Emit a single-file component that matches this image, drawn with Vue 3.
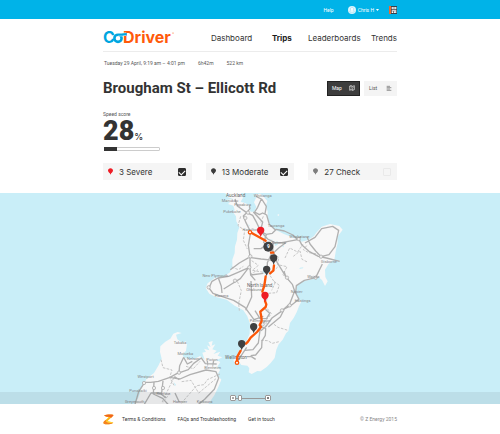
<script setup>
import { ref } from 'vue'

const score = ref(28)
const zoomLevel = ref(10)
const view = ref('map')

const navItems = [
  { label: 'Dashboard', active: false },
  { label: 'Trips', active: true },
  { label: 'Leaderboards', active: false },
  { label: 'Trends', active: false },
]

const filters = ref([
  { id: 'severe', label: '3 Severe', color: '#ee1c25', checked: true },
  { id: 'moderate', label: '13 Moderate', color: '#3a3a3a', checked: true },
  { id: 'check', label: '27 Check', color: '#7d7d7d', checked: false },
])

const pins = [
  { x: 782, y: 172, color: '#ee1c25' },
  { x: 821, y: 255, color: '#3f4041' },
  { x: 800, y: 289, color: '#3f4041' },
  { x: 795, y: 367, color: '#ee1c25' },
  { x: 761, y: 461, color: '#3f4041' },
  { x: 725, y: 512, color: '#3f4041' },
]

const places = [
  { x: 707, y: 53, name: 'Auckland', major: true },
  { x: 690, y: 66, name: 'Manukau' },
  { x: 728, y: 78, name: 'Papakura' },
  { x: 788, y: 53, name: 'Whitianga' },
  { x: 696, y: 101, name: 'Pukekohe' },
  { x: 828, y: 143, name: 'Tauranga' },
  { x: 752, y: 154, name: 'Hamilton' },
  { x: 898, y: 174, name: 'Whakatane' },
  { x: 836, y: 192, name: 'Rotorua' },
  { x: 987, y: 250, name: 'Gisborne' },
  { x: 646, y: 293, name: 'New Plymouth' },
  { x: 940, y: 296, name: 'Wairoa' },
  { x: 779, y: 321, name: 'North Island', major: true },
  { x: 762, y: 334, name: 'Ohakune' },
  { x: 890, y: 341, name: 'Napier' },
  { x: 665, y: 353, name: 'Hawera' },
  { x: 908, y: 366, name: 'Hastings' },
  { x: 780, y: 426, name: 'Palmerston' },
  { x: 708, y: 539, name: 'Wellington', major: true },
  { x: 540, y: 494, name: 'Takaka' },
  { x: 556, y: 525, name: 'Motueka' },
  { x: 580, y: 540, name: 'Nelson' },
  { x: 636, y: 545, name: 'Picton' },
  { x: 638, y: 569, name: 'Blenheim' },
  { x: 437, y: 596, name: 'Westport' },
  { x: 414, y: 637, name: 'Punakaiki' },
  { x: 490, y: 645, name: 'Reefton' },
  { x: 614, y: 669, name: 'Kaikoura' },
  { x: 404, y: 669, name: 'Greymouth' },
  { x: 540, y: 669, name: 'Hanmer' },
]

const junctions = [
  [736, 115], [751, 230], [748, 263], [705, 303], [626, 323], [861, 294], [963, 231],
  [947, 294], [846, 392], [869, 377], [788, 434], [896, 178], [462, 625], [489, 625],
  [537, 579], [432, 610], [744, 99],
]
</script>

<template>
  <div class="page">
    <div class="topbar">
      <div class="wrap topbar-row">
        <a href="#" class="top-link">Help</a>
        <button type="button" class="user">
          <svg viewBox="0 0 16 16" class="avatar" aria-hidden="true">
            <circle cx="8" cy="8" r="8" fill="#d9f3fc" />
            <path d="M8 3c-2 0-3 1.300-2.800 3.200.1 1.200.6 2 1.200 2.500-.2.900-3 1.100-3.200 3.300h9.600c-.2-2.200-3-2.400-3.200-3.300.6-.5 1.100-1.300 1.200-2.500C11 4.300 10 3 8 3z" fill="#fff" stroke="#6dcdec" stroke-width=".8" />
          </svg>
          <span>Chris H</span>
          <svg viewBox="0 0 8 5" class="caret" aria-hidden="true"><path d="M0 0h8L4 5z" fill="#fff" /></svg>
        </button>
        <svg viewBox="0 0 24 24" class="org" aria-hidden="true">
          <rect width="24" height="24" fill="#39414a" />
          <rect width="6" height="24" fill="#ed6a2c" />
          <path d="M8 3h6v6H8zM16 3h6v6h-6zM8 11h14v3H8zM8 16h5v5H8zM15 16h7v5h-7z" fill="#fff" />
          <path d="M10 5h2v2h-2zM18 5h2v2h-2zM17 18h3v1h-3z" fill="#39414a" />
        </svg>
      </div>
    </div>

    <div class="wrap">
      <header class="header">
        <a href="#" class="logo" aria-label="CoDriver">
          <svg viewBox="0 0 72 24" class="logo-art">
            <text x="0" y="17" class="logo-blue">C</text>
            <text x="20" y="17" class="logo-orange">Driver</text>
            <circle cx="15" cy="12.300" r="3.600" fill="none" stroke="#00a5e0" stroke-width="2.600" />
            <path d="M15 8.600h3.600c2 0 2.200-.4 4.600-.4" fill="none" stroke="#fff" stroke-width="3.400" />
            <path d="M15 8.600h3.600c2 0 2.200-.4 5.200-.4" fill="none" stroke="#00a5e0" stroke-width="2.400" />
            <circle cx="70" cy="7" r=".6" fill="#ff5a0a" />
          </svg>
        </a>
        <nav class="nav">
          <a v-for="item in navItems" :key="item.label" href="#" :class="{ active: item.active }">{{ item.label }}</a>
        </nav>
      </header>

      <div class="meta">
        <span>Tuesday 29 April, 9:19 am – 4:01 pm</span>
        <span>6h42m</span>
        <span>522 km</span>
      </div>

      <div class="title-row">
        <h1>Brougham St – Ellicott Rd</h1>
        <div class="views">
          <button type="button" :class="{ on: view === 'map' }" @click="view = 'map'">
            <span>Map</span>
            <svg viewBox="0 0 18 18" aria-hidden="true">
              <path d="M2 3l4-1 5 2 5-2v12l-5 2-5-2-4 2zM6 2v5M6 11v3M11 4v3M11 11v5M7 8l3 2M13 7l-2 3" fill="none" stroke="currentColor" stroke-width="1.800" />
            </svg>
          </button>
          <button type="button" :class="{ on: view === 'list' }" @click="view = 'list'">
            <span>List</span>
            <svg viewBox="0 0 18 18" aria-hidden="true">
              <path d="M2 4h10M2 8h14M2 12h10M2 16h14" fill="none" stroke="currentColor" stroke-width="1.800" />
            </svg>
          </button>
        </div>
      </div>

      <section class="score">
        <div class="score-label">Speed score</div>
        <div class="score-value"><span>{{ score }}</span><small>%</small></div>
        <div class="bar" role="progressbar" :aria-valuenow="score" aria-label="Speed score">
          <div class="bar-fill" :style="{ width: score - 4 + '%' }"></div>
        </div>
      </section>

      <div class="filters">
        <label v-for="f in filters" :key="f.id" class="filter" :for="f.id">
          <svg viewBox="0 0 15 20" class="filter-pin" aria-hidden="true">
            <path d="M7.500 0C3 0 0 3.200 0 7c0 3.500 3 6 5.500 8L7.500 20l2-5C12 13 15 10.500 15 7c0-3.800-3-7-7.500-7z" :fill="f.color" />
          </svg>
          <span>{{ f.label }}</span>
          <input :id="f.id" v-model="f.checked" type="checkbox" />
        </label>
      </div>
    </div>

    <section class="map" aria-label="Trip map">
      <svg class="map-art" viewBox="0 40 1500 633">
        <g fill="#f8f8f8">
          <path d="M672 40L690 46 682 52 700 58 676 61 690 68 684 73 700 78 704 92 698 96 708 110 709 125 718 143 712 160 711 180 705 200 704 220 697 240 697 262 690 278 670 291 645 294 623 311 617 325 628 342 648 352 680 360 704 378 730 392 742 410 750 432 749 462 738 488 722 505 710 530 700 541 706 553 718 548 724 556 742 558 748 566 746 578 755 583 772 574 782 575 800 562 812 550 824 535 829 510 836 494 848 480 858 461 865 454 870 430 881 415 890 398 897 380 905 364 893 355 888 335 891 318 906 305 930 300 955 292 966 301 975 319 983 305 976 292 975 270 986 252 1003 240 1008 210 1013 190 1012 172 1028 150 1018 139 990 133 965 141 950 158 942 169 925 181 905 186 880 174 850 162 828 151 812 139 803 118 803 95 797 80 802 64 790 50 782 42 766 44 768 55 762 68 769 82 763 96 752 96 745 84 752 78 735 70 722 66 729 54 722 40z" />
          <path d="M545 460L528 465 532 479 546 489 558 485 561 493 558 513 548 526 551 533 565 538 583 538 600 529 614 540 607 519 618 516 612 507 628 512 621 497 632 502 625 488 638 484 635 498 646 494 637 509 650 513 640 523 661 516 653 528 667 533 650 542 661 547 653 560 660 571 652 586 664 600 655 622 643 647 625 673 382 673 405 672 415 654 425 625 440 597 462 580 475 558 485 537 480 517 481 500 496 486 511 477 520 462 533 457z" />
          <path d="M834 103l4 2-2 4-4-2z" />
        </g>
        <g fill="#c9eef8">
          <path d="M822 188l10-3 1 10-8 4zM810 181l7-2-1 6-7 1zM791 260l8 3-3 20-9-4zM900 264l10-1-1 3-11 2zM846 200l5-3 1 6zM745 134l4 3-2 4zM521 607l7 8-3 5z" />
        </g>
        <g fill="none" stroke="#c6c6c6" stroke-width="3" stroke-dasharray="8 4">
          <path d="M722 110l-8 28 20 14-4 30 12 26M790 110l-8 20M695 262l20 8 15-10M712 305l12 28-8 38 2 22M810 215l26 18-3 22 28 6-12 24 22 22M855 235l14-30 24 12 16-24M880 230l20-16 6 25 16 8M822 305l16 12-8 22-26 2-5 26M833 262l-24 24 16 24-10 22M755 243l20 14-18 15 33 6M750 285l24-15M802 387l12 15-15 19-2 22M822 434l12 9 30 9M783 482l20 1 14 8 20-5M483 540l6 24 27 7-7 22 13 24M521 595l-35 73M545 606l28-4 23 38 52-43M660 583l-38 17-10 15-22 3-35 40-13 16M558 560l22 7 20-22M510 640l-22 30M920 198l-10 12 16 9 28 4" />
        </g>
        <g fill="none" stroke="#b0b0b0" stroke-width="4" stroke-linejoin="round">
          <path d="M705 58l7 21 28 20 10-12-2-10M740 99l-10 10 8 20 14 28-7 40 5 33 0 34 2 22 14 16M740 99l18 8 12 22 13 27 20 22 22 11 20 0 52-10 8 16 22 20 28 15 24 5 40 10M783 156l16 8 18-3 12-12 24 5 26 12 12 12 12-7M768 50l16 8-11 25-9 14 14 8 10-5 12 6 8 28 19 18M760 97l28 30-6 24M785 58l14 22-4 22M691 270l27-20 28-16M746 264l-32 14-28 12-32 5-18 10-9 20 12 16 28 10 34 11 34 21 27 37 28-10M655 295l9 25 2 20M746 264l-25 33-26 16-24 15M752 286l38-5M753 304l2 48-18 40M753 234l30 4 38 4M761 207l22 0 28-20M799 165l-8 23 12 13M820 190l-2 24-16 35 0 30M820 214l10 32 29 47 18 21 7 20-15 39-25 22-28 20-18 25-15 13M859 188l-22 16-13 12M915 190l30-17 20-26 33-7 18 12-6 27-5 22-18 24-24 6-16-17-17-21-9-22M967 253l-20 41-34 8-24 16-2 22 10 19-26 20-18 9-12 24-36 30M858 293l-6-18M765 393l15 24 20-1 9-15-13-12M788 434l8-12M735 512l24-2 16-20 6-46M783 441l14 6-1 20-10 17-1 20-18 22-15 2M740 531l13-1 14 9M710 548l12-18 18-27" />
          <path d="M551 533l-12 25-2 20-27 15-35 12-23 3-18 0-18 28-11 38M510 593l30 5 30-13 48-14 30 5 8 19-13 34-29 30-22 18M489 604l-4 36-32 0-20 34M462 608l-2 35 28 13 17 19M539 579l26-9 16-19 23-16 12 17 34 1M622 543l1 14M641 543l-3 15M551 533l11 20 15-8M537 600l-14-9M525 640l13 28M478 640l20 14" />
        </g>
        <g fill="#eeeeee" stroke="#a5a5a5" stroke-width="2">
          <circle v-for="(j, i) in junctions" :key="i" :cx="j[0]" :cy="j[1]" r="5" />
        </g>
        <g text-anchor="middle">
          <text v-for="p in places" :key="p.name" :x="p.x" :y="p.y" :class="p.major ? 'place major' : 'place'">{{ p.name }}</text>
        </g>
        <g fill="none" stroke="#fb5607" stroke-width="7" stroke-linejoin="round" stroke-linecap="round">
          <path d="M755 160l42 23M813 219l7 0M822 257l-2 16-10 8M797 290l-4 28-6 18M795 364l4 10-2 8-16 14 3 16 1 12-6 12 4 6-12 15-19 17-8 12-6 6M722 513l-10 18-1 12" />
          <circle cx="750" cy="158" r="5" fill="#fff" stroke-width="4" />
          <circle cx="711" cy="549" r="5" fill="#fff" stroke-width="4" />
        </g>
        <g v-for="(pin, i) in pins" :key="'pin' + i" :transform="`translate(${pin.x} ${pin.y})`">
          <path d="M0 0L-3-7C-7-11-11-14-11-20a11 11 0 0 1 22 0c0 6-4 9-8 13z" :fill="pin.color" />
        </g>
        <circle cx="805" cy="201" r="15" fill="#3f4041" />
        <text x="805" y="206" text-anchor="middle" class="cluster">9</text>
      </svg>
      <div class="zoom">
        <button type="button" aria-label="Zoom out"><svg viewBox="0 0 6 6"><path d="M2 3h2" stroke="#555" /></svg></button>
        <input v-model="zoomLevel" type="range" min="0" max="100" aria-label="Zoom level" />
        <button type="button" aria-label="Zoom in"><svg viewBox="0 0 6 6"><path d="M2 3h2M3 2v2" stroke="#555" /></svg></button>
      </div>
    </section>

    <footer class="wrap footer">
      <svg viewBox="0 0 33 33" class="z-logo" aria-hidden="true">
        <path d="M3 4c7-3 19-3 27-2 2 1 1 3-1 5L13 22c6 1 12 2 18 4-7 5-19 6-27 4-4-1-3-5 0-8L17 10C11 10 6 8 3 4z" fill="#fdb913" />
        <path d="M3 4c7-3 19-3 27-2 2 1 1 3-1 5l-5 5c0-4-12-1-21-8z" fill="#f0641e" />
        <path d="M3 22l6-5c-3 6 6 10 22 9-7 5-19 6-27 4-4-1-3-5-1-8z" fill="#f58220" />
        <path d="M9 21c7 2 15 3 22 5-8 2-19 1-22-5z" fill="#ffd83a" />
      </svg>
      <a href="#">Terms &amp; Conditions</a>
      <a href="#">FAQs and Troubleshooting</a>
      <a href="#">Get in touch</a>
      <span class="copy">© Z Energy 2015</span>
    </footer>
  </div>
</template>

<style>
body {
  margin: 0;
  background: #fff;
}
</style>

<style scoped>
.page {
  font-family: Roboto, "Liberation Sans", sans-serif;
  color: #333;
  font-size: 5px;
}
.page * {
  box-sizing: border-box;
}
.page button {
  font: inherit;
  border: 0;
  padding: 0;
  background: none;
  color: inherit;
  display: flex;
  align-items: center;
}
.page a {
  color: inherit;
  text-decoration: none;
}
.wrap {
  max-width: 294px;
  margin: 0 auto;
}
.topbar {
  background: #00b3e8;
  color: #fff;
}
.topbar-row {
  height: 19px;
  display: flex;
  align-items: center;
  justify-content: flex-end;
}
.page .user {
  gap: 2px;
  margin: 0 10px 0 14px;
}
.avatar {
  width: 8px;
  height: 8px;
}
.caret {
  width: 3px;
  height: 2px;
}
.org {
  width: 8px;
  height: 8px;
}
.header {
  height: 33px;
  display: flex;
  justify-content: space-between;
  align-items: center;
  border-bottom: 1px solid #ececec;
  padding-top: 6px;
}
.logo-art {
  display: block;
  width: 72px;
  height: 24px;
}
.logo-blue,
.logo-orange {
  font-family: Inter, "Liberation Sans", sans-serif;
  font-size: 16px;
  font-weight: 700;
}
.logo-blue {
  fill: #00a5e0;
}
.logo-orange {
  fill: #ff5a0a;
}
.nav {
  display: grid;
  grid-template-columns: 61px 36px 63px auto;
  font-family: Inter, "Liberation Sans", sans-serif;
  font-size: 8px;
  line-height: 12px;
}
.nav .active {
  font-weight: 700;
  color: #1c1c1c;
}
.meta {
  display: flex;
  gap: 13px;
  padding: 7px 1px 0;
  line-height: 8px;
  color: #555;
}
.title-row {
  display: flex;
  justify-content: space-between;
  align-items: center;
  margin-top: 13px;
  height: 16px;
}
h1 {
  margin: 0;
  font-size: 15px;
  line-height: 16px;
  font-weight: 700;
}
.views {
  display: flex;
  gap: 4px;
}
.views button {
  width: 33px;
  height: 15px;
  padding: 0 5px;
  background: #f4f4f4;
  justify-content: space-between;
  color: #555;
}
.views .on {
  background: #3d3d3d;
  outline: 1px solid #222;
  outline-offset: -1px;
  color: #fff;
}
.views svg {
  width: 6px;
  height: 6px;
}
.score {
  margin-top: 14px;
}
.score-label {
  line-height: 8px;
  color: #555;
}
.score-value {
  display: flex;
  align-items: baseline;
  height: 26px;
  font-size: 27px;
  line-height: 26px;
  font-weight: 900;
}
.score-value small {
  font-family: Inter, "Liberation Sans", sans-serif;
  font-size: 9px;
  line-height: 12px;
  font-weight: 500;
}
.bar {
  width: 56px;
  height: 4px;
  margin: 3px 0 0 1px;
  border: 1px solid #ccc;
  border-radius: 1px;
}
.bar-fill {
  height: 4px;
  margin: -1px;
  background: #333;
}
.filters {
  display: grid;
  grid-template-columns: repeat(3, 1fr);
  gap: 14px;
  margin-top: 12px;
}
.filter {
  display: flex;
  align-items: center;
  height: 17px;
  padding: 0 6px 0 5px;
  background: #f5f5f5;
  font-family: Inter, "Liberation Sans", sans-serif;
  font-size: 8px;
}
.filter-pin {
  width: 5px;
  height: 7px;
  margin-right: 6px;
}
.filter input {
  appearance: none;
  width: 8px;
  height: 8px;
  margin: 0 0 0 auto;
  border: 1px solid #e9e9e9;
  border-radius: 1px;
  display: grid;
  place-items: center;
}
.filter input:checked {
  background: #2e2e2e;
  border-color: #2e2e2e;
}
.filter input:checked::after {
  content: "";
  width: 5px;
  height: 3px;
  border: solid #fff;
  border-width: 0 0 1px 1px;
  transform: rotate(-45deg);
}
.map {
  position: relative;
  margin-top: 13px;
  background: #c9eef8;
}
.map-art {
  display: block;
  width: 100%;
  height: 211px;
}
.place {
  font-size: 12px;
  fill: #858585;
}
.major {
  font-size: 14px;
  fill: #666;
}
.cluster {
  font-size: 15px;
  font-weight: 700;
  fill: #fff;
}
.zoom {
  position: absolute;
  left: 0;
  right: 0;
  bottom: 0;
  height: 12px;
  background: rgba(80, 90, 100, 0.1);
  display: flex;
  align-items: center;
  justify-content: center;
}
.zoom button {
  width: 6px;
  height: 6px;
  background: #fff;
  outline: 1px solid #999;
  outline-offset: -1px;
  border-radius: 1px;
}
.zoom svg {
  width: 6px;
  height: 6px;
}
.zoom input {
  appearance: none;
  width: 29px;
  height: 6px;
  margin: 0;
  background: linear-gradient(#999, #999) center / 100% 1px no-repeat;
}
.zoom input::-webkit-slider-thumb {
  appearance: none;
  width: 4px;
  height: 6px;
  background: #fff;
  border: 1px solid #999;
  border-radius: 1px;
}
.footer {
  height: 30px;
  display: flex;
  align-items: center;
  gap: 12px;
}
.z-logo {
  width: 11px;
  height: 11px;
  margin-right: -4px;
}
.copy {
  margin-left: auto;
  color: #888;
}
</style>
